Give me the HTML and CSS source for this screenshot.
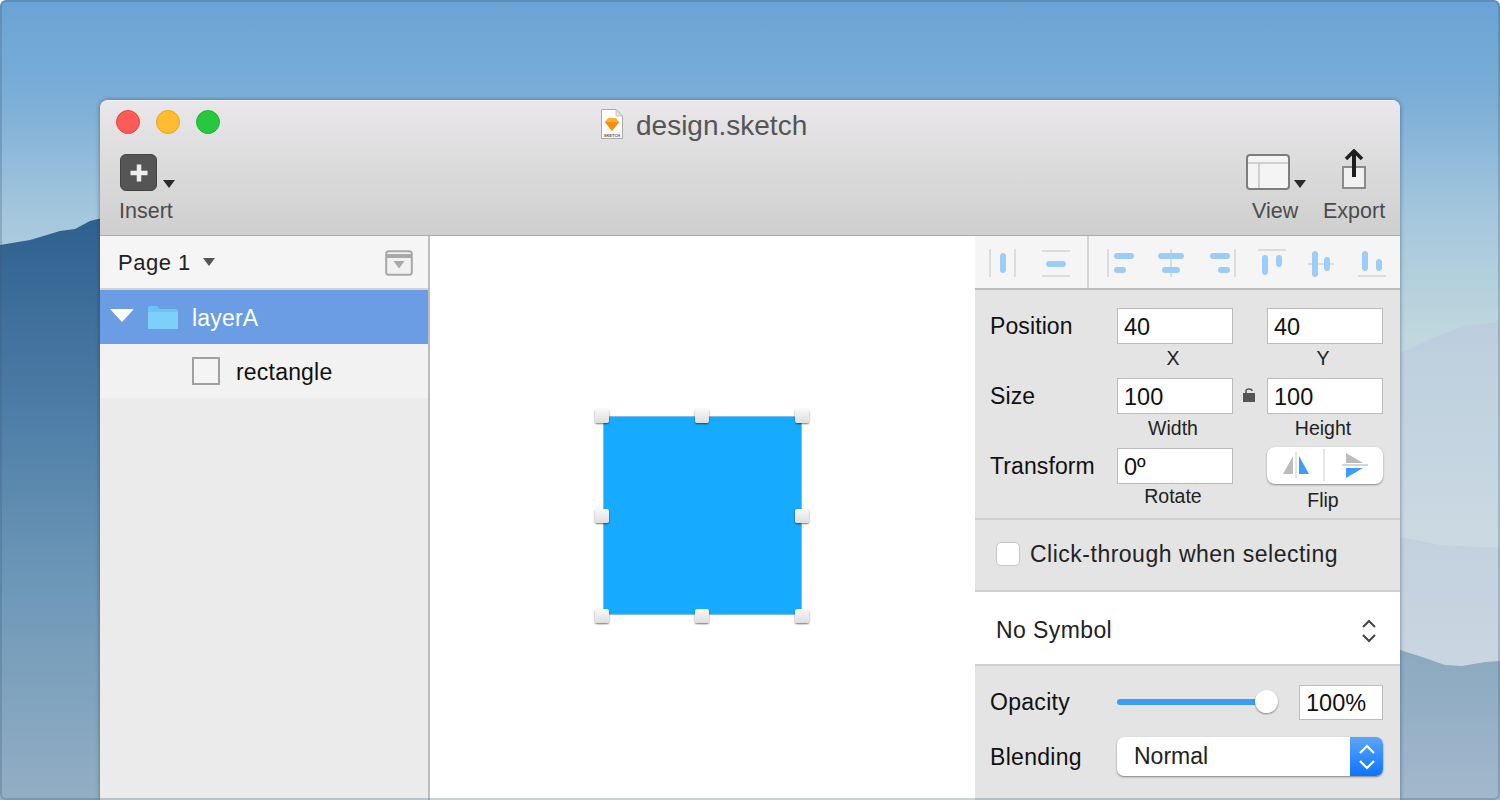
FILE: index.html
```html
<!DOCTYPE html>
<html lang="en">
  <head>
    <meta charset="UTF-8" />
    <meta name="viewport" content="width=device-width, initial-scale=1.0" />
    <title>design.sketch</title>
    <link rel="stylesheet" href="styles.css">
  </head>
  <body>
    <div class="desktop">
      <svg class="wallpaper" width="1500" height="800" viewBox="0 0 1500 800">
        <defs>
          <linearGradient id="sky" x1="0" y1="0" x2="0" y2="1">
            <stop offset="0" stop-color="#6aa3d5" />
            <stop offset="0.13" stop-color="#7dafd7" />
            <stop offset="0.27" stop-color="#a5c7dd" />
            <stop offset="0.42" stop-color="#c0d7dd" />
            <stop offset="1" stop-color="#d0dce4" />
          </linearGradient>
          <linearGradient id="hill-left" x1="0" y1="0" x2="0" y2="1">
            <stop offset="0" stop-color="#2f5f8d" />
            <stop offset="0.35" stop-color="#4f7fa8" />
            <stop offset="0.65" stop-color="#6f99b8" />
            <stop offset="1" stop-color="#93aec4" />
          </linearGradient>
          <linearGradient id="hill-back" x1="0" y1="0" x2="0" y2="1">
            <stop offset="0" stop-color="#bccede" />
            <stop offset="1" stop-color="#ccdae2" />
          </linearGradient>
          <linearGradient id="hill-mid" x1="0" y1="0" x2="0" y2="1">
            <stop offset="0" stop-color="#c3d0de" />
            <stop offset="1" stop-color="#d0dce3" />
          </linearGradient>
          <linearGradient id="hill-right" x1="0" y1="0" x2="0" y2="1">
            <stop offset="0" stop-color="#8aa9bf" />
            <stop offset="1" stop-color="#a3b8cd" />
          </linearGradient>
        </defs>
        <rect width="1500" height="800" fill="url(#sky)" />
        <path d="M0 245 L30 240 L60 231 L75 229 L90 221 L110 216 L200 216 L200 800 L0 800 Z" fill="url(#hill-left)" />
        <path d="M1400 353 L1440 335 L1465 326 L1480 324 L1500 322 L1500 560 L1400 560 Z" fill="url(#hill-back)" />
        <path d="M1400 537 L1440 545 L1500 548 L1500 800 L1400 800 Z" fill="url(#hill-mid)" />
        <path d="M1400 650 L1425 658 L1445 665 L1462 666 L1485 662 L1500 661 L1500 800 L1400 800 Z" fill="url(#hill-right)" />
      </svg>

      <div class="window">
        <header class="toolbar">
          <div class="title-row">
            <div class="lights">
              <span class="light light-red"></span>
              <span class="light light-yellow"></span>
              <span class="light light-green"></span>
            </div>
            <div class="doc-title">
              <svg width="24" height="32" viewBox="0 0 24 32">
                <path d="M1.500 1.500 H16 L22.500 8 V30.500 H1.500 Z" fill="#fdfdfd" stroke="#a9a9a9" />
                <path d="M16 1.500 V8 H22.500 Z" fill="#e2e2e2" stroke="#b5b5b5" stroke-width="0.600" />
                <path d="M8 10 H16 L19 14 L12 23 L5 14 Z" fill="#fdb02a" />
                <path d="M5 14 H19 L12 23 Z" fill="#f78d14" />
                <text class="doc-badge" x="12" y="29" text-anchor="middle">SKETCH</text>
              </svg>
              <span class="doc-name">design.sketch</span>
            </div>
          </div>
          <div class="tools">
            <div class="tool tool-insert">
              <div class="tool-icon">
                <span class="insert-btn">
                  <svg width="18" height="18" viewBox="0 0 18 18"><path d="M9 0.500 V17.500 M0.500 9 H17.500" stroke="#eeeeee" stroke-width="4.500" /></svg>
                </span>
                <span class="caret"></span>
              </div>
              <span class="tool-label">Insert</span>
            </div>
            <div class="tool tool-view">
              <div class="tool-icon">
                <svg width="46" height="37" viewBox="0 0 46 37">
                  <rect x="1" y="1" width="42" height="34" rx="3" fill="#f4f4f4" stroke="#7d7d7d" stroke-width="2" />
                  <path d="M2 9 H42 M13 9 V34" stroke="#c3c3c3" stroke-width="1.500" fill="none" />
                </svg>
                <span class="caret"></span>
              </div>
              <span class="tool-label">View</span>
            </div>
            <div class="tool tool-export">
              <div class="tool-icon">
                <svg width="26" height="41" viewBox="0 0 26 41">
                  <rect x="2" y="18" width="22" height="21" fill="#f1f1f1" stroke="#8a8a8a" stroke-width="2" />
                  <path d="M13 28 V4" stroke="#1e1e1e" stroke-width="4" fill="none" />
                  <path d="M5 10 L13 2 L21 10" stroke="#1e1e1e" stroke-width="3.500" fill="none" />
                </svg>
              </div>
              <span class="tool-label">Export</span>
            </div>
          </div>
        </header>

        <div class="main">
          <aside class="layers">
            <div class="page-select">
              <span class="page-name">Page 1</span>
              <span class="page-caret"></span>
              <svg class="page-toggle" width="28" height="26" viewBox="0 0 28 26">
                <rect x="1.200" y="1.200" width="25.600" height="23.600" rx="2.500" fill="#f1f1f1" stroke="#a8a8a8" stroke-width="2" />
                <path d="M1 6 H27" stroke="#a8a8a8" stroke-width="4" />
                <path d="M8.500 11 H19.500 L14 18.500 Z" fill="#a8a8a8" />
              </svg>
            </div>
            <div class="layer layer-group">
              <span class="disclosure"></span>
              <svg width="32" height="26" viewBox="0 0 32 26">
                <path d="M1 4 Q1 2 3 2 H10 L12.500 5 H29 Q31 5 31 7 V24 Q31 25 30 25 H2 Q1 25 1 24 Z" fill="#6cc4f4" />
                <path d="M1 8 H31 V24 Q31 25 30 25 H2 Q1 25 1 24 Z" fill="#7dd0f8" />
              </svg>
              <span class="layer-name">layerA</span>
            </div>
            <div class="layer layer-child">
              <span class="shape-icon"></span>
              <span class="layer-name">rectangle</span>
            </div>
          </aside>

          <section class="canvas">
            <div class="artboard-rect">
              <span class="handle handle-tl"></span>
              <span class="handle handle-tc"></span>
              <span class="handle handle-tr"></span>
              <span class="handle handle-ml"></span>
              <span class="handle handle-mr"></span>
              <span class="handle handle-bl"></span>
              <span class="handle handle-bc"></span>
              <span class="handle handle-br"></span>
            </div>
          </section>

          <aside class="inspector">
            <div class="align-bar">
              <svg width="414" height="52" viewBox="0 0 414 52">
                <g class="align-line">
                  <path d="M15 13 V41 M40 13 V41" />
                  <path d="M67 15 H95 M67 40 H95" />
                  <path d="M133 13 V41" />
                  <path d="M196 13 V41" />
                  <path d="M260 13 V41" />
                  <path d="M283 14 H311" />
                  <path d="M333 28 H359" />
                  <path d="M383 40 H411" />
                </g>
                <path class="align-split" d="M113 0 V52" />
                <g class="align-mark">
                  <rect x="25" y="17" width="6" height="20" rx="3" />
                  <rect x="71" y="25" width="20" height="6" rx="3" />
                  <rect x="139" y="17" width="20" height="6" rx="3" />
                  <rect x="139" y="31" width="12" height="6" rx="3" />
                  <rect x="183" y="17" width="26" height="6" rx="3" />
                  <rect x="187" y="31" width="18" height="6" rx="3" />
                  <rect x="235" y="17" width="20" height="6" rx="3" />
                  <rect x="243" y="31" width="12" height="6" rx="3" />
                  <rect x="287" y="19" width="6" height="20" rx="3" />
                  <rect x="301" y="19" width="6" height="12" rx="3" />
                  <rect x="337" y="15" width="6" height="26" rx="3" />
                  <rect x="349" y="21" width="6" height="14" rx="3" />
                  <rect x="387" y="15" width="6" height="20" rx="3" />
                  <rect x="401" y="23" width="6" height="12" rx="3" />
                </g>
              </svg>
            </div>

            <div class="geometry">
              <span class="field-name">Position</span>
              <div class="field"><span class="input">40</span><span class="hint">X</span></div>
              <span></span>
              <div class="field"><span class="input">40</span><span class="hint">Y</span></div>

              <span class="field-name">Size</span>
              <div class="field"><span class="input">100</span><span class="hint">Width</span></div>
              <svg class="lock" width="14" height="16" viewBox="0 0 14 16">
                <path d="M0 5 H12 V14 H0 Z" fill="#555" />
                <path d="M3 5 V3 Q3 1 6 1 Q9 1 9 3" stroke="#555" stroke-width="1.500" fill="none" />
              </svg>
              <div class="field"><span class="input">100</span><span class="hint">Height</span></div>

              <span class="field-name">Transform</span>
              <div class="field"><span class="input">0º</span><span class="hint hint-rotate">Rotate</span></div>
              <span></span>
              <div class="field">
                <div class="flip">
                  <svg width="58" height="36" viewBox="0 0 58 36">
                    <path d="M26 9 V27 H16 Z" fill="#bcbcbc" />
                    <path d="M32 9 V27 H42 Z" fill="#3d9bfb" />
                    <path d="M29 5 V31" stroke="#c9c9c9" />
                    <path d="M57 2 V34" stroke="#dcdcdc" stroke-width="1.500" />
                  </svg>
                  <svg width="58" height="36" viewBox="0 0 58 36">
                    <path d="M21 6 L38 16 H21 Z" fill="#bcbcbc" />
                    <path d="M21 21 H38 L21 31 Z" fill="#3d9bfb" />
                    <path d="M17 18 H43" stroke="#c9c9c9" stroke-width="1.500" />
                  </svg>
                </div>
                <span class="hint hint-flip">Flip</span>
              </div>
            </div>

            <div class="click-through">
              <span class="checkbox"></span>
              <span>Click-through when selecting</span>
            </div>

            <div class="symbol">
              <span>No Symbol</span>
              <svg width="16" height="26" viewBox="0 0 16 26">
                <path d="M2 9 L8 3 L14 9 M2 17 L8 23 L14 17" stroke="#444" stroke-width="2" fill="none" />
              </svg>
            </div>

            <div class="style-section">
              <div class="style-row">
                <span class="field-name">Opacity</span>
                <div class="slider"><span class="knob"></span></div>
                <span class="input input-opacity">100%</span>
              </div>
              <div class="style-row style-row-blend">
                <span class="field-name">Blending</span>
                <div class="select">
                  <span class="select-value">Normal</span>
                  <span class="select-arrows">
                    <svg width="20" height="30" viewBox="0 0 20 30">
                      <path d="M3 11 L10 4 L17 11 M3 19 L10 26 L17 19" stroke="#fff" stroke-width="2.200" fill="none" />
                    </svg>
                  </span>
                </div>
              </div>
            </div>
          </aside>
        </div>
      </div>
    </div>
  </body>
</html>
```

FILE: styles.css
```css
* {
  box-sizing: border-box;
}

html,
body {
  margin: 0;
  padding: 0;
  background-color: #fff;
}

body {
  font-family: "Liberation Sans", Arial, sans-serif;
  color: #222;
}

.desktop {
  position: relative;
  width: 1500px;
  height: 800px;
  padding: 100px 100px 0;
  overflow: hidden;
  border-radius: 6px 6px 0 0;
}

.desktop::after {
  content: "";
  position: absolute;
  inset: 0;
  border: 2px solid rgba(60, 90, 120, 0.28);
  border-radius: 6px;
  pointer-events: none;
}

.wallpaper {
  position: absolute;
  top: 0;
  left: 0;
}

.window {
  position: relative;
  width: 1300px;
  height: 700px;
  background-color: #e4e4e4;
  border-radius: 8px 8px 0 0;
  overflow: hidden;
  box-shadow: 0 0 4px rgba(30, 50, 70, 0.55);
  display: flex;
  flex-direction: column;
}

/* toolbar */
.toolbar {
  height: 136px;
  padding-top: 1px;
  background: linear-gradient(#e9e7e9, #cfcfcf);
  border-top: 1px solid #f3f3f3;
  border-bottom: 1px solid #adadad;
  flex-shrink: 0;
}

.title-row {
  display: flex;
  align-items: flex-start;
  height: 45px;
  padding: 8px 0 0 16px;
}

.lights {
  display: flex;
  gap: 16px;
  width: 204px;
}

.light {
  width: 24px;
  height: 24px;
  border-radius: 50%;
}

.light-red {
  background-color: #fc5b57;
  border: 1px solid #e5453f;
}

.light-yellow {
  background-color: #ffbc2e;
  border: 1px solid #e5a520;
}

.light-green {
  background-color: #27c840;
  border: 1px solid #1fb532;
}

.doc-title {
  display: flex;
  align-items: center;
  gap: 12px;
  margin-left: 280px;
  margin-top: -4px;
  font-size: 28px;
  color: #555;
}

.doc-name {
  padding-top: 4px;
}

.doc-badge {
  font-size: 4px;
  font-weight: bold;
  fill: #555;
}

.tools {
  display: flex;
  align-items: flex-start;
}

.tool {
  display: flex;
  flex-direction: column;
}

.tool-icon {
  position: relative;
  display: flex;
  height: 46px;
  align-items: flex-end;
}

.tool-label {
  font-size: 21.500px;
  line-height: 24px;
  color: #4c4c4c;
  margin-top: 6px;
}

.tool-insert {
  margin-left: 19px;
}

.insert-btn {
  display: flex;
  align-items: center;
  justify-content: center;
  width: 37px;
  height: 37px;
  margin: 0 0 2px 1px;
  background-color: #555;
  border: 1px solid #444;
  border-radius: 6px;
}

.caret {
  width: 0;
  height: 0;
  border-left: 6px solid transparent;
  border-right: 6px solid transparent;
  border-top: 8px solid #2a2a2a;
  margin: 0 0 5px 6px;
}

.tool-view {
  margin-left: 1077px;
}

.tool-view .tool-icon {
  margin-left: -6px;
}

.tool-view .tool-icon svg {
  margin-bottom: 2px;
}

.tool-view .caret {
  margin-left: 2px;
}

.tool-export {
  margin-left: 17px;
  align-items: center;
}

.tool-export .tool-icon svg {
  margin-bottom: 3px;
}

/* layer list */
.main {
  flex: 1;
  display: grid;
  grid-template-columns: 330px 545px 425px;
  min-height: 0;
}

.layers {
  background-color: #ebebeb;
  border-right: 2px solid #bdbdbd;
}

.page-select {
  display: flex;
  align-items: center;
  height: 54px;
  padding: 2px 15px 0 18px;
  background-color: #f5f5f5;
  border-bottom: 2px solid #d2d2d2;
  font-size: 22px;
  letter-spacing: 0.5px;
}

.page-caret {
  width: 0;
  height: 0;
  margin: -3px 0 0 12px;
  border-left: 6px solid transparent;
  border-right: 6px solid transparent;
  border-top: 8px solid #555;
}

.page-toggle {
  margin-left: auto;
}

.layer {
  display: flex;
  align-items: center;
  height: 54px;
  font-size: 23px;
  letter-spacing: 0.2px;
}

.layer-name {
  padding-top: 3px;
}

.layer-group {
  padding-left: 10px;
  background-color: #6a9de3;
  color: #fff;
}

.disclosure {
  width: 0;
  height: 0;
  margin: -4px 13px 0 0;
  border-left: 12px solid transparent;
  border-right: 12px solid transparent;
  border-top: 13px solid #fff;
}

.layer-group svg {
  margin-right: 13px;
}

.layer-child {
  padding-left: 92px;
  background-color: #f2f2f2;
  color: #111;
}

.shape-icon {
  width: 28px;
  height: 28px;
  margin-right: 16px;
  border: 2px solid #a0a0a0;
  background-color: #f4f4f4;
}

/* canvas */
.canvas {
  background-color: #fff;
  display: flex;
  justify-content: center;
  align-items: flex-start;
  padding-top: 180px;
}

.artboard-rect {
  position: relative;
  width: 199px;
  height: 199px;
  background-color: #17abff;
  box-shadow: inset 0 0 0 1px #7dbfe6;
}

.handle {
  position: absolute;
  width: 14px;
  height: 14px;
  background: linear-gradient(#f8f8f8, #dedede);
  border-radius: 2px;
  box-shadow: 0 1px 2px rgba(0, 0, 0, 0.55);
}

.handle-tl { top: -7px; left: -8px; }
.handle-tc { top: -7px; left: 92px; }
.handle-tr { top: -7px; right: -7px; }
.handle-ml { top: 93px; left: -8px; }
.handle-mr { top: 93px; right: -7px; }
.handle-bl { bottom: -8px; left: -8px; }
.handle-bc { bottom: -8px; left: 92px; }
.handle-br { bottom: -8px; right: -7px; }

/* inspector */
.inspector {
  display: flex;
  flex-direction: column;
  background-color: #e4e4e4;
  font-size: 22px;
}

.align-bar {
  height: 54px;
  background-color: #f5f5f5;
  border-bottom: 2px solid #bdbdbd;
}

.align-bar svg {
  display: block;
}

.align-line path {
  stroke: #dcdcdc;
  stroke-width: 2;
  fill: none;
}

.align-split {
  stroke: #d4d4d4;
  stroke-width: 2;
}

.align-mark rect {
  fill: #9ccdf7;
}

.geometry {
  display: grid;
  grid-template-columns: 127px 116px 34px 116px;
  grid-auto-rows: 70px;
  height: 230px;
  padding: 18px 0 0 15px;
  border-bottom: 2px solid #cfcfcf;
}

.field-name {
  font-size: 23px;
  line-height: 36px;
  color: #111;
  letter-spacing: 0.1px;
}

.field {
  display: flex;
  flex-direction: column;
  align-items: center;
}

.input {
  display: block;
  width: 116px;
  height: 36px;
  padding-left: 6px;
  background-color: #fff;
  border: 1px solid #bcbcbc;
  font-size: 23.500px;
  line-height: 36px;
  color: #111;
}

.hint {
  font-size: 19.500px;
  line-height: 24px;
  margin: 2px 4px 0 0;
  color: #222;
}

.hint-rotate {
  margin-top: 0;
}

.hint-flip {
  margin-top: 4px;
}

.lock {
  margin: 10px 0 0 10px;
}

.flip {
  display: flex;
  width: 116px;
  height: 37px;
  margin-top: -1px;
  background-color: #fff;
  border-radius: 8px;
  box-shadow: 0 1px 2px rgba(0, 0, 0, 0.4);
}

.click-through {
  display: flex;
  align-items: center;
  height: 72px;
  padding: 0 0 2px 21px;
  gap: 10px;
  border-bottom: 2px solid #cfcfcf;
  font-size: 23px;
  color: #222;
  letter-spacing: 0.5px;
}

.checkbox {
  width: 24px;
  height: 24px;
  background-color: #fff;
  border: 1px solid #c6c6c6;
  border-radius: 5px;
}

.symbol {
  display: flex;
  align-items: center;
  justify-content: space-between;
  height: 74px;
  padding: 5px 23px 0 21px;
  background-color: #fff;
  border-bottom: 2px solid #cfcfcf;
  font-size: 23px;
  letter-spacing: 0.4px;
}

.style-section {
  padding: 18px 17px 0 15px;
}

.style-row {
  display: flex;
  align-items: center;
  height: 36px;
}

.style-row .field-name {
  width: 127px;
  flex-shrink: 0;
  letter-spacing: 0.3px;
}

.slider {
  position: relative;
  width: 150px;
  height: 6px;
  background-color: #3d9bfb;
  border-radius: 3px;
}

.knob {
  position: absolute;
  top: -9px;
  right: -11px;
  width: 23px;
  height: 23px;
  background-color: #fff;
  border-radius: 50%;
  box-shadow: 0 1px 2px rgba(0, 0, 0, 0.45);
}

.input-opacity {
  width: 84px;
  height: 35px;
  margin-left: 32px;
  padding-left: 6px;
  line-height: 34px;
}

.style-row-blend {
  height: 39px;
  margin-top: 17px;
}

.select {
  display: flex;
  width: 266px;
  height: 39px;
  background-color: #fff;
  border-radius: 7px;
  overflow: hidden;
  box-shadow: 0 1px 2px rgba(0, 0, 0, 0.45);
}

.select-value {
  flex: 1;
  padding-left: 17px;
  font-size: 23px;
  line-height: 38px;
}

.select-arrows {
  display: flex;
  align-items: center;
  justify-content: center;
  width: 33px;
  background: linear-gradient(#5ba6f7, #0d74ff);
}
```
